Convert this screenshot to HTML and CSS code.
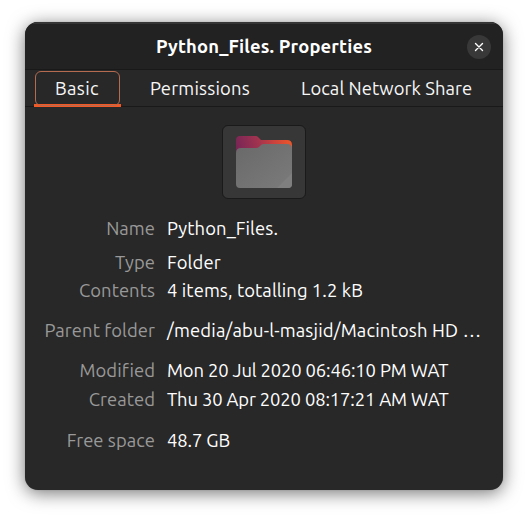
FILE: index.html
```html
<!DOCTYPE html>
<html lang="en">
<head>
<meta charset="utf-8">
<title>Python_Files. Properties</title>
<link rel="stylesheet" href="styles.css">
</head>
<body>
<main class="window">
  <header class="titlebar">
    <h1 class="title">Python_Files. Properties</h1>
    <button class="close" aria-label="Close">
      <svg width="24" height="24" viewBox="0 0 24 24"><path d="M8.5 8.5l7 7M15.5 8.5l-7 7" fill="none" stroke="#fff" stroke-width="1.4" stroke-linecap="round"/></svg>
    </button>
  </header>
  <nav class="tabs">
    <button class="tab tab-active"><span>Basic</span></button>
    <button class="tab tab-perm">Permissions</button>
    <button class="tab tab-share">Local Network Share</button>
  </nav>
  <section class="body">
    <button class="icon-button" aria-label="Folder icon">
      <svg width="82" height="72" viewBox="0 0 82 72">
        <defs>
          <linearGradient id="back" gradientUnits="userSpaceOnUse" x1="13" y1="24" x2="69" y2="10"><stop offset="0" stop-color="#762556"/><stop offset=".4" stop-color="#a0334f"/><stop offset=".65" stop-color="#c7413f"/><stop offset="1" stop-color="#f05826"/></linearGradient>
          <linearGradient id="front" x1="0" y1="0" x2="1" y2="1"><stop offset="0" stop-color="#696969"/><stop offset="1" stop-color="#7b7b7b"/></linearGradient>
        </defs>
        <path d="M13 14q0-4 4-4h16q1 0 2 1l3 3h26q5 0 5 5v9H13z" fill="url(#back)"/>
        <path d="M13 27q0-5 5-5h15q2 0 3-1l2-2q1-1 3-1h23q5 0 5 5v35q0 4-4 4H17q-4 0-4-4z" fill="url(#front)"/>
        <path d="M69 47v11q0 4-4 4H54z" fill="#7f7f7f"/>
      </svg>
    </button>
    <dl class="details">
      <dt>Name</dt><dd>Python_Files.</dd>
      <dt>Type</dt><dd>Folder</dd>
      <dt>Contents</dt><dd>4 items, totalling 1.2 kB</dd>
      <dt>Parent folder</dt><dd class="path">/media/abu-l-masjid/Macintosh HD …</dd>
      <dt>Modified</dt><dd class="date">Mon 20 Jul 2020 06:46:10 PM WAT</dd>
      <dt>Created</dt><dd class="date">Thu 30 Apr 2020 08:17:21 AM WAT</dd>
      <dt>Free space</dt><dd class="size">48.7 GB</dd>
    </dl>
  </section>
</main>
</body>
</html>
```
FILE: styles.css
```css
* { box-sizing: border-box; }
body {
  margin: 0;
  padding: 22px 25px 28px;
  background: #fff;
  font: 18.4px/28px "Ubuntu", "Noto Sans", sans-serif;
  color: #f7f7f7;
  overflow: hidden;
}
button { font: inherit; color: inherit; border: 0; padding: 0; background: none; }
.window {
  width: 478px;
  height: 468px;
  border-radius: 13px;
  background: #282828;
  overflow: hidden;
  box-shadow: 0 3px 18px rgba(0, 0, 0, .55), 0 0 1px rgba(0, 0, 0, .3);
}
.titlebar {
  height: 48px;
  display: grid;
  grid-template-columns: 36px 1fr 36px;
  align-items: center;
  background: #222;
  border-top: 2px solid #353535;
  border-bottom: 1px solid #191919;
}
.title {
  grid-column: 2;
  margin: 0;
  padding-bottom: 2px;
  font-size: 18.4px;
  letter-spacing: .16px;
  line-height: 28px;
  font-weight: 700;
  text-align: center;
  white-space: nowrap;
  color: #fff;
}
.close { width: 24px; height: 24px; border-radius: 50%; background: #383838; }
.close svg { display: block; }
.tabs {
  display: flex;
  height: 37px;
  border-bottom: 1px solid #191919;
  padding-left: 9px;
  white-space: nowrap;
}
.tab { height: 36px; text-align: left; }
.tab-active {
  width: 87px;
  height: 37px;
  padding: 1px 1px 0;
  border-bottom: 3px solid #f15a26;
  letter-spacing: .35px;
}
.tab-active span {
  display: block;
  height: 35px;
  padding-left: 19px;
  line-height: 33px;
  border: 1px solid #b56b50;
  border-radius: 6px;
}
.tab-perm { width: 151px; padding-left: 29px; letter-spacing: .2px; }
.tab-share { padding-left: 29px; letter-spacing: .08px; }
.body { height: 383px; padding-top: 18px; }
.icon-button {
  display: block;
  width: 84px;
  height: 74px;
  margin: 0 auto;
  border: 1px solid #1a1a1a;
  border-radius: 6px;
  background: #373737;
}
.icon-button svg { display: block; }
.details {
  display: grid;
  grid-template-columns: 130px 1fr;
  grid-template-rows: 34px 28px 40px 40px 29px 41px 28px;
  column-gap: 12px;
  margin: 15px 0 0;
  white-space: nowrap;
  letter-spacing: .1px;
}
.details dt { text-align: right; color: #999; letter-spacing: .06px; }
.details dd { margin: 0; color: #fff; }
.details .path { letter-spacing: .18px; }
.details .date { letter-spacing: -.13px; }
.details .size { letter-spacing: -.1px; }
```
